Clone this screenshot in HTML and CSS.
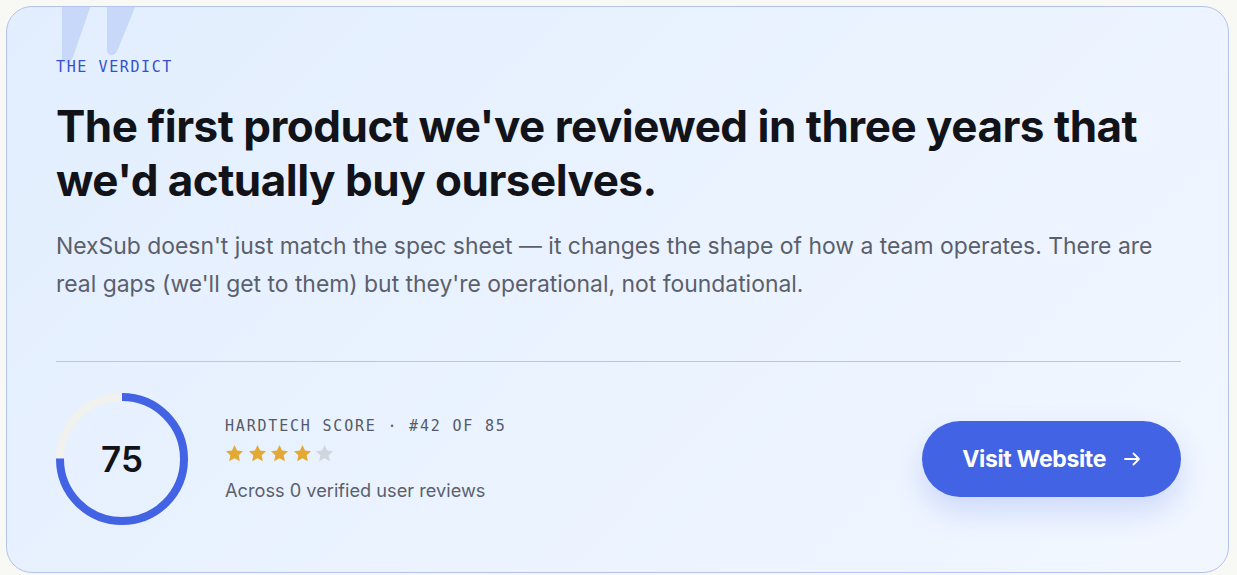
FILE: index.html
```html
<!DOCTYPE html>
<html lang="en">
<head>
    <meta charset="UTF-8">
    <meta name="viewport" content="width=device-width, initial-scale=1.0">
    <title>The Verdict</title>
    <link rel="stylesheet" href="styles.css">
</head>
<body>
    <section class="verdict-card">
        <!-- decorative quote tails peeking in from the top edge -->
        <svg class="quote-mark" width="90" height="70" viewBox="0 0 90 70">
            <path d="M6 -2 H35 L17 50 Q14 57 9 56 Q5 55 6 48 Z" />
            <path d="M51 -2 H80 L62 42 Q59 49 55 48 Q50 47 51 41 Z" />
        </svg>

        <p class="eyebrow">THE VERDICT</p>
        <h1>The first product we've reviewed in three years that we'd actually buy ourselves.</h1>
        <p class="summary">NexSub doesn't just match the spec sheet — it changes the shape of how a team operates. There are real gaps (we'll get to them) but they're operational, not foundational.</p>

        <hr class="divider">

        <div class="score-row">
            <div class="score-ring">
                <svg width="132" height="132" viewBox="0 0 132 132">
                    <circle class="ring-track" cx="66" cy="66" r="62" />
                    <!-- 75% of the circumference, starting at 12 o'clock -->
                    <circle class="ring-fill" cx="66" cy="66" r="62" stroke-dasharray="292.2 389.6" transform="rotate(-90 66 66)" />
                </svg>
                <span class="score-value">75</span>
            </div>

            <div class="score-meta">
                <p class="score-label">HARDTECH SCORE · #42 OF 85</p>
                <div class="stars">
                    <svg class="star on" viewBox="0 0 20 20"><path d="M10 1l2.7 5.8 6.3.8-4.6 4.3 1.2 6.3L10 15.1l-5.6 3.1 1.2-6.3L1 7.6l6.3-.8z"/></svg>
                    <svg class="star on" viewBox="0 0 20 20"><path d="M10 1l2.7 5.8 6.3.8-4.6 4.3 1.2 6.3L10 15.1l-5.6 3.1 1.2-6.3L1 7.6l6.3-.8z"/></svg>
                    <svg class="star on" viewBox="0 0 20 20"><path d="M10 1l2.7 5.8 6.3.8-4.6 4.3 1.2 6.3L10 15.1l-5.6 3.1 1.2-6.3L1 7.6l6.3-.8z"/></svg>
                    <svg class="star on" viewBox="0 0 20 20"><path d="M10 1l2.7 5.8 6.3.8-4.6 4.3 1.2 6.3L10 15.1l-5.6 3.1 1.2-6.3L1 7.6l6.3-.8z"/></svg>
                    <svg class="star" viewBox="0 0 20 20"><path d="M10 1l2.7 5.8 6.3.8-4.6 4.3 1.2 6.3L10 15.1l-5.6 3.1 1.2-6.3L1 7.6l6.3-.8z"/></svg>
                </div>
                <p class="review-count">Across 0 verified user reviews</p>
            </div>

            <a class="visit-btn" href="#">
                Visit Website
                <svg width="18" height="18" viewBox="0 0 18 18"><path d="M2 9h14M10.5 3.5L16 9l-5.5 5.5" /></svg>
            </a>
        </div>
    </section>
</body>
</html>
```

FILE: styles.css
```css
/* Page */
body {
    margin: 0;
    padding: 6px 8px 2px 6px;
    background-color: #f8f8f5;
    font-family: 'Inter', 'Noto Sans', sans-serif;
}

/* Verdict card */
.verdict-card {
    position: relative;
    overflow: hidden;
    height: 567px;
    box-sizing: border-box;
    padding: 50px 47px 0 49px;
    border: 1px solid #b3c3ee;
    border-radius: 26px;
    background: linear-gradient(135deg, #e2eefe 0%, #ebf3ff 55%, #f2f7ff 100%);
}

.quote-mark {
    position: absolute;
    top: 0;
    left: 49px;
    fill: #c8d8f9;
    pointer-events: none;
}

.eyebrow {
    position: relative;
    margin: 0;
    font-family: 'DejaVu Sans Mono', monospace;
    font-size: 15px;
    line-height: 20px;
    letter-spacing: 1.6px;
    color: #3550cf;
}

h1 {
    position: relative;
    margin: 22px 0 0;
    max-width: 1100px;
    font-size: 44px;
    font-weight: 700;
    line-height: 54px;
    letter-spacing: -0.5px;
    color: #111318;
}

.summary {
    margin: 20px 0 0;
    font-size: 22.9px;
    line-height: 38px;
    color: #5b5f6c;
}

.divider {
    margin: 58px 0 0;
    border: none;
    border-top: 1px solid #b7c5ec;
}

/* Score + call to action */
.score-row {
    display: flex;
    align-items: center;
    margin-top: 31px;
}

.score-ring {
    position: relative;
    width: 132px;
    height: 132px;
    flex-shrink: 0;
}

.score-ring svg {
    display: block;
}

.ring-track,
.ring-fill {
    fill: none;
    stroke-width: 8;
}

.ring-track {
    stroke: #f1f1ee;
}

.ring-fill {
    stroke: #4263e3;
}

.score-value {
    position: absolute;
    inset: 0;
    display: flex;
    align-items: center;
    justify-content: center;
    font-size: 35px;
    font-weight: 600;
    color: #111318;
}

.score-meta {
    margin-left: 37px;
    flex: 1;
}

.score-label {
    margin: 0;
    font-family: 'DejaVu Sans Mono', monospace;
    font-size: 15px;
    line-height: 20px;
    letter-spacing: 1.8px;
    color: #555a66;
}

.stars {
    display: flex;
    gap: 3.5px;
    margin-top: 8px;
}

.star {
    width: 19px;
    height: 19px;
    fill: #d1d5dd;
}

.star.on {
    fill: #e3a935;
}

.review-count {
    margin: 14px 0 0;
    font-size: 18.2px;
    line-height: 26px;
    color: #5b5f6c;
}

.visit-btn {
    display: flex;
    align-items: center;
    gap: 17px;
    height: 76px;
    padding: 0 40px 0 40px;
    box-sizing: border-box;
    border-radius: 38px;
    background-color: #4263e3;
    color: white;
    font-size: 23px;
    font-weight: 700;
    letter-spacing: -0.35px;
    text-decoration: none;
    box-shadow: 0 14px 30px rgba(66, 99, 227, 0.2);
}

.visit-btn svg {
    fill: none;
    stroke: white;
    stroke-width: 1.8;
    stroke-linecap: round;
    stroke-linejoin: round;
}
```
